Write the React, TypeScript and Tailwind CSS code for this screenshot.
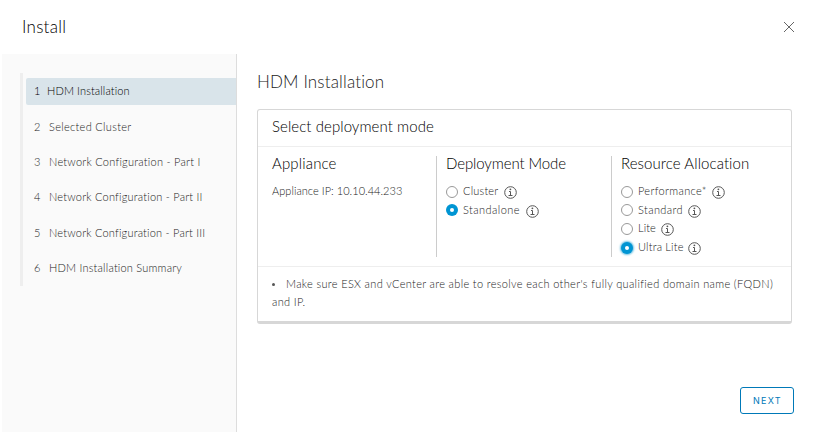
import React from "react";

const steps = [
  { label: "HDM Installation", track: "tracking-[0.12px]" },
  { label: "Selected Cluster", track: "tracking-[0.32px]" },
  { label: "Network Configuration - Part I", track: "tracking-[0.25px]" },
  { label: "Network Configuration - Part II", track: "tracking-[0.22px]" },
  { label: "Network Configuration - Part III", track: "tracking-[0.21px]" },
  { label: "HDM Installation Summary", track: "tracking-[0.21px]" },
];

function InfoIcon({ className }: { className: string }) {
  return (
    <svg className={`h-[13px] w-[13px] shrink-0 ${className}`} viewBox="0 0 13 13" fill="none" stroke="#565656">
      <circle cx="6.5" cy="6.5" r="5.8" />
      <path d="M5 5.5H6.5V9.5M4.5 9.5H8.5" />
      <circle cx="6.4" cy="3.3" r="0.9" fill="#565656" stroke="none" />
    </svg>
  );
}

function Radio({ state }: { state: "off" | "on" | "focus" }) {
  if (state === "off") {
    return <span className="h-3 w-3 shrink-0 rounded-full border border-[#999999] bg-white" />;
  }
  return (
    <span
      className={`flex h-3 w-3 shrink-0 items-center justify-center rounded-full bg-[#0095d3] ${
        state === "focus" ? "shadow-[0_0_2px_1px_#6bc1e3]" : ""
      }`}
    >
      <span className="h-1 w-1 rounded-full bg-white" />
    </span>
  );
}

type OptionProps = {
  label: string;
  state?: "off" | "on" | "focus";
  row: string;
  text: string;
  icon: string;
};

function Option({ label, state = "off", row, text, icon }: OptionProps) {
  return (
    <div className={`flex items-center ${row}`}>
      <Radio state={state} />
      <span className={`ml-[5px] shrink-0 whitespace-nowrap ${text}`}>{label}</span>
      <InfoIcon className={icon} />
    </div>
  );
}

export default function App() {
  return (
    <div className="flex h-[432px] w-[813px] flex-col overflow-hidden bg-white font-['Lato','Liberation_Sans',sans-serif] text-[11px] font-light text-[#222222]">
      <header className="flex h-[54px] shrink-0 items-center justify-between pr-[19px] pl-[22px]">
        <h1 className="text-[17px] leading-6 font-light tracking-[0.25px] text-black">Install</h1>
        <svg className="h-[10px] w-[10px]" viewBox="0 0 10 10" stroke="#666" strokeWidth="1">
          <path d="M0 0L10 10M10 0L0 10" />
        </svg>
      </header>
      <div className="flex min-h-0 flex-1">
        <aside className="ml-[2px] w-[235px] shrink-0 border-r border-[#dddddd] bg-[#fafafa] pt-[19px] pl-[18px]">
          <ol className="h-[213px] border-l-[3px] border-[#eeeeee] pt-[5px] pl-[3px]">
            {steps.map((step, i) => (
              <li
                key={step.label}
                className={`mb-[8.4px] flex h-[27px] items-center rounded-l-[2px] pl-2 whitespace-nowrap ${
                  i === 0 ? "bg-[#d9e4ea] text-black" : ""
                }`}
              >
                <span className={i === 0 ? "w-[13px]" : "w-[15px]"}>{i + 1}</span>
                <span className={step.track}>{step.label}</span>
              </li>
            ))}
          </ol>
        </aside>
        <main className="flex min-w-0 flex-1 flex-col pr-[19px] pl-5">
          <h2 className="mt-4 text-[17px] leading-6 font-light tracking-[0.15px] text-[#222222]">HDM Installation</h2>
          <section className="mt-[15px] h-[215px] w-[535px] shrink-0 rounded-[3px] border border-b-[3px] border-[#d7d7d7]">
            <h3 className="flex h-[37px] items-center border-b border-[#eeeeee] pb-[3px] pl-[14px] text-[15px] font-light tracking-[0.07px] text-black">
              Select deployment mode
            </h3>
            <div className="flex h-[120px] border-b border-[#eeeeee] pt-[9px] pl-[14px] text-[11px]">
              <div className="h-[101px] w-[165px] border-r border-[#cccccc]">
                <h4 className="-mt-[2px] text-[15px] leading-[18px] font-light tracking-[0.15px] text-black">Appliance</h4>
                <p className="mt-[11px] leading-4 tracking-[0.04px]">Appliance IP: 10.10.44.233</p>
              </div>
              <div className="h-[101px] w-[175px] border-r border-[#cccccc] pl-[9px]">
                <h4 className="-mt-[2px] text-[15px] leading-[18px] font-light tracking-[-0.1px] text-black">Deployment Mode</h4>
                <div className="mt-[11px]">
                  <Option label="Cluster" row="h-[18px]" text="w-[41px] tracking-[0.2px] -translate-y-px" icon="" />
                  <Option label="Standalone" state="on" row="h-[18px]" text="w-[63px] tracking-[0.45px]" icon="translate-y-px" />
                </div>
              </div>
              <div className="pl-[9px]">
                <h4 className="-mt-[2px] text-[15px] leading-[18px] font-light tracking-[0.08px] text-black">Resource Allocation</h4>
                <div className="mt-[11px]">
                  <Option label="Performance*" row="h-[18px]" text="w-[74px] tracking-[0.35px] -translate-y-px" icon="" />
                  <Option label="Standard" row="h-[18px]" text="w-[50px] tracking-[0.4px]" icon="translate-y-px" />
                  <Option label="Lite" row="h-[20px]" text="w-[23px] tracking-[0.1px] -translate-y-px" icon="" />
                  <Option label="Ultra Lite" state="focus" row="h-[18px]" text="w-[50px] tracking-[0.2px] -translate-y-px" icon="" />
                </div>
              </div>
            </div>
            <div className="pt-[8px] pl-[14px] leading-[18px] tracking-[0.345px] whitespace-nowrap">
              <div className="flex items-center">
                <span className="mr-[11px] h-[3px] w-[3px] rounded-full bg-[#565656]" />
                <span>Make sure ESX and vCenter are able to resolve each other's fully qualified domain name (FQDN)</span>
              </div>
              <div>and IP.</div>
            </div>
          </section>
          <button className="mt-auto mb-[18px] h-[27px] w-[54px] self-end rounded-[3px] border border-[#0079b8] pl-px font-['Inter','Liberation_Sans',sans-serif] text-[9px] font-normal tracking-[1.3px] text-[#0079b8]">
            NEXT
          </button>
        </main>
      </div>
    </div>
  );
}
